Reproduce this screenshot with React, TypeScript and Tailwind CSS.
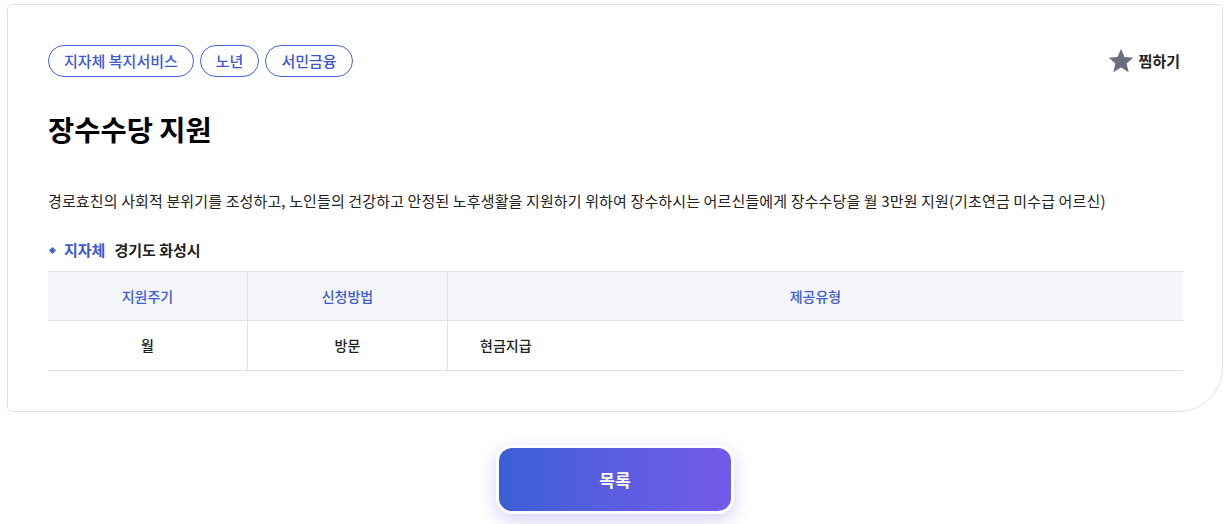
import React from 'react';

const tags = ['지자체 복지서비스', '노년', '서민금융'];

const StarIcon = () => (
  <svg width="26" height="26" viewBox="0 0 24 24" fill="#6b6d80">
    <path d="M12 0.8l3.2 7.5 8.1.7-6.1 5.4 1.9 8L12 18.1l-7.1 4.3 1.9-8L.7 9l8.1-.7z" />
  </svg>
);

export default function App() {
  return (
    <div className="min-h-[524px] bg-white font-['Noto_Sans_CJK_KR','Noto_Sans',sans-serif] text-[#222]">
      <div className="ml-[7px] mt-[4px] w-[1216px] h-[408px] border border-[#e2e2e2] rounded-[6px] rounded-br-[44px] pl-[40px] pr-[39px] pt-[40px]">
        {/* 태그 + 찜하기 */}
        <div className="flex items-center justify-between">
          <div className="flex items-center gap-[6px]">
            {tags.map((t) => (
              <span
                key={t}
                className="h-[32px] px-[15px] flex items-center rounded-full border border-[#4562dc] text-[15px] font-medium text-[#3d57d4]"
              >
                {t}
              </span>
            ))}
          </div>
          <button className="flex items-center gap-[5px] mr-[3px] text-[15px] font-bold text-[#222]">
            <StarIcon />
            찜하기
          </button>
        </div>

        {/* 제목 */}
        <h1 className="mt-[32px] text-[28.5px] leading-[39px] font-bold text-black">장수수당 지원</h1>

        {/* 설명 */}
        <p className="mt-[41px] text-[15px] leading-[24px] tracking-[0.13px] text-[#222]">
          경로효친의 사회적 분위기를 조성하고, 노인들의 건강하고 안정된 노후생활을 지원하기 위하여 장수하시는 어르신들에게 장수수당을 월 3만원 지원(기초연금 미수급 어르신)
        </p>

        {/* 지자체 */}
        <div className="mt-[25px] flex items-center h-[24px] text-[15px] font-bold">
          <span className="w-[5px] h-[5px] ml-[2px] mr-[9px] bg-[#4562dc] rotate-45" />
          <span className="text-[#3d57d4]">지자체</span>
          <span className="ml-[9px] text-[#222]">경기도 화성시</span>
        </div>

        {/* 표 */}
        <div className="mt-[9px] border-t border-b border-[#e0e0e0] text-[14px]">
          <div className="grid grid-cols-[200px_200px_1fr] h-[49px] bg-[#f5f6fa] border-b border-[#e0e0e0] font-medium text-[#3f5bd8]">
            <div className="flex items-center justify-center border-r border-[#e0e0e0]">지원주기</div>
            <div className="flex items-center justify-center border-r border-[#e0e0e0]">신청방법</div>
            <div className="flex items-center justify-center">제공유형</div>
          </div>
          <div className="grid grid-cols-[200px_200px_1fr] h-[49px] font-medium text-[#222]">
            <div className="flex items-center justify-center border-r border-[#e0e0e0]">월</div>
            <div className="flex items-center justify-center border-r border-[#e0e0e0]">방문</div>
            <div className="flex items-center pl-[32px]">현금지급</div>
          </div>
        </div>
      </div>

      {/* 목록 버튼 */}
      <div className="w-[1216px] ml-[7px] flex justify-center mt-[33px]">
        <button className="w-[238px] h-[69px] rounded-[16px] border-[3px] border-white bg-gradient-to-r from-[#3b5fd6] to-[#735be9] text-white text-[17px] font-bold shadow-[0_6px_18px_rgba(100,90,220,0.28)]">
          목록
        </button>
      </div>
    </div>
  );
}
